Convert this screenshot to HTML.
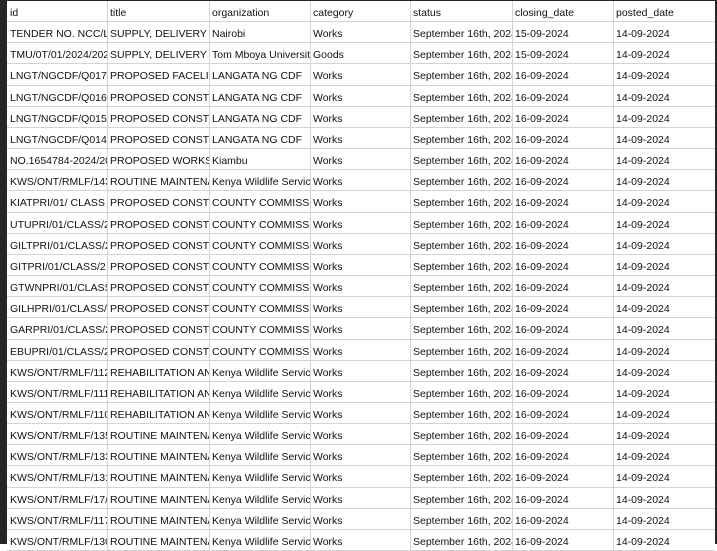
<!DOCTYPE html>
<html><head><style>
html,body{margin:0;padding:0;}
body{width:717px;height:544px;overflow:hidden;background:#fff;font-family:"Liberation Sans",Arial,sans-serif;font-size:10.5px;color:#111;position:relative;}
.l{position:absolute;left:0;top:0;width:7px;height:544px;background:#262626;z-index:2;}
.r{position:absolute;right:0;top:0;width:2px;height:544px;background:#262626;z-index:2;}
.t{position:absolute;left:0;top:0;width:717px;height:1px;background:#262626;z-index:2;}
.g{position:absolute;left:7px;top:1px;width:708px;}
.row{height:21.17px;box-sizing:border-box;border-bottom:1px solid #d4d4d4;display:flex;}
.row div{box-sizing:border-box;height:100%;border-right:1px solid #d4d4d4;padding:5px 0 0 2px;line-height:14px;white-space:nowrap;overflow:hidden;flex:none;}
.row div:nth-child(1){width:101px;padding-left:3px}
.row div:nth-child(2){width:102px}
.row div:nth-child(3){width:101px}
.row div:nth-child(4){width:100px}
.row div:nth-child(5){width:102px}
.row div:nth-child(6){width:101px}
.row div:nth-child(7){width:101px;border-right:none}
</style></head><body>
<div class="t"></div><div class="l"></div><div class="r"></div>
<div class="g">
<div class="row"><div>id</div><div>title</div><div>organization</div><div>category</div><div>status</div><div>closing_date</div><div>posted_date</div></div>
<div class="row"><div>TENDER NO. NCC/L/2024</div><div>SUPPLY, DELIVERY</div><div>Nairobi</div><div>Works</div><div>September 16th, 2024</div><div>15-09-2024</div><div>14-09-2024</div></div>
<div class="row"><div>TMU/0T/01/2024/2025</div><div>SUPPLY, DELIVERY</div><div>Tom Mboya University</div><div>Goods</div><div>September 16th, 2024</div><div>15-09-2024</div><div>14-09-2024</div></div>
<div class="row"><div>LNGT/NGCDF/Q017/2024</div><div>PROPOSED FACELIFT</div><div>LANGATA NG CDF</div><div>Works</div><div>September 16th, 2024</div><div>16-09-2024</div><div>14-09-2024</div></div>
<div class="row"><div>LNGT/NGCDF/Q016/2024</div><div>PROPOSED CONSTRUCTION</div><div>LANGATA NG CDF</div><div>Works</div><div>September 16th, 2024</div><div>16-09-2024</div><div>14-09-2024</div></div>
<div class="row"><div>LNGT/NGCDF/Q015/2024</div><div>PROPOSED CONSTRUCTION</div><div>LANGATA NG CDF</div><div>Works</div><div>September 16th, 2024</div><div>16-09-2024</div><div>14-09-2024</div></div>
<div class="row"><div>LNGT/NGCDF/Q014/2024</div><div>PROPOSED CONSTRUCTION</div><div>LANGATA NG CDF</div><div>Works</div><div>September 16th, 2024</div><div>16-09-2024</div><div>14-09-2024</div></div>
<div class="row"><div>NO.1654784-2024/2025</div><div>PROPOSED WORKS</div><div>Kiambu</div><div>Works</div><div>September 16th, 2024</div><div>16-09-2024</div><div>14-09-2024</div></div>
<div class="row"><div>KWS/ONT/RMLF/143</div><div>ROUTINE MAINTENANCE</div><div>Kenya Wildlife Service</div><div>Works</div><div>September 16th, 2024</div><div>16-09-2024</div><div>14-09-2024</div></div>
<div class="row"><div>KIATPRI/01/ CLASS</div><div>PROPOSED CONSTRUCTION</div><div>COUNTY COMMISSIONER</div><div>Works</div><div>September 16th, 2024</div><div>16-09-2024</div><div>14-09-2024</div></div>
<div class="row"><div>UTUPRI/01/CLASS/2</div><div>PROPOSED CONSTRUCTION</div><div>COUNTY COMMISSIONER</div><div>Works</div><div>September 16th, 2024</div><div>16-09-2024</div><div>14-09-2024</div></div>
<div class="row"><div>GILTPRI/01/CLASS/2</div><div>PROPOSED CONSTRUCTION</div><div>COUNTY COMMISSIONER</div><div>Works</div><div>September 16th, 2024</div><div>16-09-2024</div><div>14-09-2024</div></div>
<div class="row"><div>GITPRI/01/CLASS/2</div><div>PROPOSED CONSTRUCTION</div><div>COUNTY COMMISSIONER</div><div>Works</div><div>September 16th, 2024</div><div>16-09-2024</div><div>14-09-2024</div></div>
<div class="row"><div>GTWNPRI/01/CLASS/2</div><div>PROPOSED CONSTRUCTION</div><div>COUNTY COMMISSIONER</div><div>Works</div><div>September 16th, 2024</div><div>16-09-2024</div><div>14-09-2024</div></div>
<div class="row"><div>GILHPRI/01/CLASS/2</div><div>PROPOSED CONSTRUCTION</div><div>COUNTY COMMISSIONER</div><div>Works</div><div>September 16th, 2024</div><div>16-09-2024</div><div>14-09-2024</div></div>
<div class="row"><div>GARPRI/01/CLASS/2</div><div>PROPOSED CONSTRUCTION</div><div>COUNTY COMMISSIONER</div><div>Works</div><div>September 16th, 2024</div><div>16-09-2024</div><div>14-09-2024</div></div>
<div class="row"><div>EBUPRI/01/CLASS/2</div><div>PROPOSED CONSTRUCTION</div><div>COUNTY COMMISSIONER</div><div>Works</div><div>September 16th, 2024</div><div>16-09-2024</div><div>14-09-2024</div></div>
<div class="row"><div>KWS/ONT/RMLF/112</div><div>REHABILITATION AND</div><div>Kenya Wildlife Service</div><div>Works</div><div>September 16th, 2024</div><div>16-09-2024</div><div>14-09-2024</div></div>
<div class="row"><div>KWS/ONT/RMLF/111</div><div>REHABILITATION AND</div><div>Kenya Wildlife Service</div><div>Works</div><div>September 16th, 2024</div><div>16-09-2024</div><div>14-09-2024</div></div>
<div class="row"><div>KWS/ONT/RMLF/110</div><div>REHABILITATION AND</div><div>Kenya Wildlife Service</div><div>Works</div><div>September 16th, 2024</div><div>16-09-2024</div><div>14-09-2024</div></div>
<div class="row"><div>KWS/ONT/RMLF/135</div><div>ROUTINE MAINTENANCE</div><div>Kenya Wildlife Service</div><div>Works</div><div>September 16th, 2024</div><div>16-09-2024</div><div>14-09-2024</div></div>
<div class="row"><div>KWS/ONT/RMLF/133</div><div>ROUTINE MAINTENANCE</div><div>Kenya Wildlife Service</div><div>Works</div><div>September 16th, 2024</div><div>16-09-2024</div><div>14-09-2024</div></div>
<div class="row"><div>KWS/ONT/RMLF/131</div><div>ROUTINE MAINTENANCE</div><div>Kenya Wildlife Service</div><div>Works</div><div>September 16th, 2024</div><div>16-09-2024</div><div>14-09-2024</div></div>
<div class="row"><div>KWS/ONT/RMLF/17/</div><div>ROUTINE MAINTENANCE</div><div>Kenya Wildlife Service</div><div>Works</div><div>September 16th, 2024</div><div>16-09-2024</div><div>14-09-2024</div></div>
<div class="row"><div>KWS/ONT/RMLF/117</div><div>ROUTINE MAINTENANCE</div><div>Kenya Wildlife Service</div><div>Works</div><div>September 16th, 2024</div><div>16-09-2024</div><div>14-09-2024</div></div>
<div class="row"><div>KWS/ONT/RMLF/130</div><div>ROUTINE MAINTENANCE</div><div>Kenya Wildlife Service</div><div>Works</div><div>September 16th, 2024</div><div>16-09-2024</div><div>14-09-2024</div></div>
</div>
</body></html>
